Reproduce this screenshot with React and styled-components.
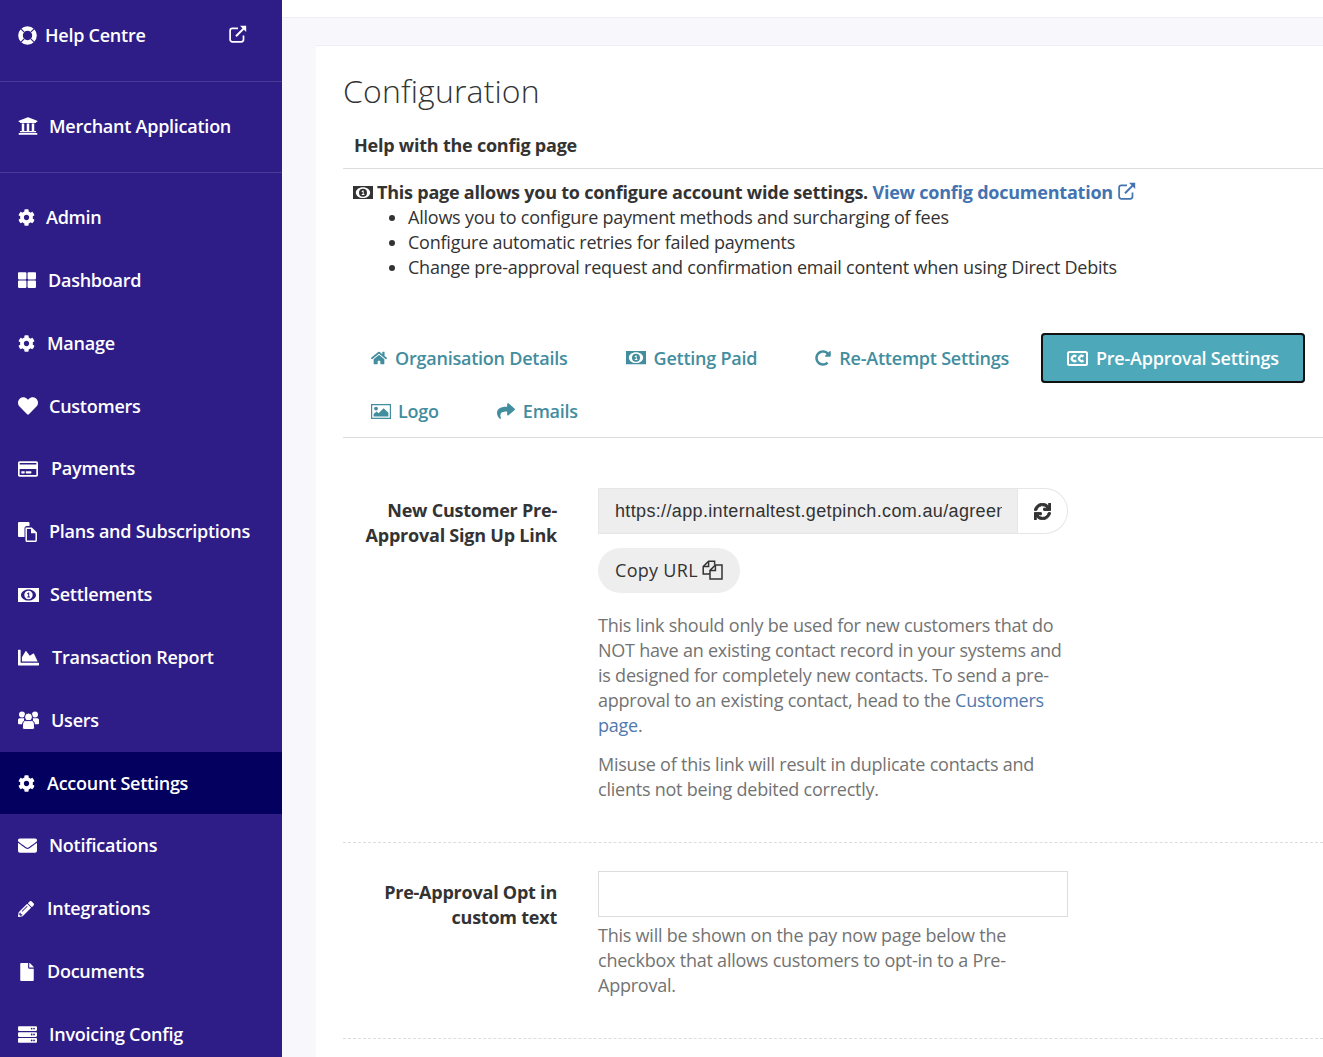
import React from 'react'
import styled, { createGlobalStyle } from 'styled-components'
import {
  FaUniversity,
  FaCog,
  FaThLarge,
  FaHeart,
  FaRegCreditCard,
  FaChartArea,
  FaEnvelope,
  FaPencilAlt,
  FaFile,
  FaServer,
  FaHome,
  FaRedoAlt,
  FaShare,
  FaSync,
} from 'react-icons/fa'

const GlobalStyle = createGlobalStyle`
  html, body {
    margin: 0;
    padding: 0;
    height: 100%;
    overflow: hidden;
  }
  body {
    font-family: "Open Sans", "Liberation Sans", sans-serif;
    font-size: 18px;
    line-height: 25px;
    letter-spacing: -0.23px;
    color: #333;
    background: #f7f7fc;
  }
  * { box-sizing: border-box; }
`

const LifeRingIcon = () => (
  <svg width="19" height="19" viewBox="0 0 19 19" fill="none" stroke="currentColor">
    <circle cx="9.5" cy="9.5" r="7" strokeWidth="4.6" />
    <path d="M2.6 2.6l3.6 3.6M16.4 2.600l-3.600 3.600M2.600 16.400l3.600-3.600M16.400 16.400l-3.600-3.600" stroke="#2e1d87" strokeWidth="1.1" />
  </svg>
)

const ExternalIcon = ({ size = 18 }) => (
  <svg width={size} height={size} viewBox="0 0 18 18" fill="none" stroke="currentColor" strokeWidth="1.7">
    <path d="M14.5 10.5v4a2.3 2.3 0 0 1-2.3 2.3H3.4a2.3 2.3 0 0 1-2.3-2.3V5.7a2.3 2.3 0 0 1 2.3-2.3H9" />
    <path d="M7 11.2L15.6 2.6" strokeWidth="2" />
    <path d="M11 .8h6.2V7z" fill="currentColor" stroke="none" />
  </svg>
)

const MoneyIcon = ({ width = 21 }) => (
  <svg width={width} height={(width * 14) / 21} viewBox="0 0 21 14" fill="currentColor">
    <path fillRule="evenodd" d="M0 0h21v14H0zM10.5 1.400C6.300 1.400 3 4 3 7s3.300 5.600 7.500 5.600S18 10 18 7s-3.300-5.600-7.500-5.600z" />
    <path fillRule="evenodd" d="M10.500 2.800a4.200 4.200 0 1 1 0 8.400 4.200 4.200 0 0 1 0-8.400zM9.200 5.200v1h1v2.300H9.200v1h2.800v-1h-.8V4.600h-.8z" />
  </svg>
)

const CaptionIcon = () => (
  <svg width="21" height="15" viewBox="0 0 21 15" fill="none" stroke="currentColor">
    <rect x="1" y="1" width="19" height="13" rx="1.5" strokeWidth="2" />
    <path d="M9.200 5.600a2.600 2.600 0 1 0 0 3.800M16.400 5.600a2.600 2.600 0 1 0 0 3.800" strokeWidth="2.300" />
  </svg>
)

const PictureIcon = () => (
  <svg width="20" height="15" viewBox="0 0 20 15" fill="currentColor">
    <path fillRule="evenodd" d="M0 0h20v15H0zM1.200 1.200v12.600h17.600V1.200z" />
    <circle cx="5" cy="4.600" r="1.900" />
    <path d="M2.600 12.400V10l3-2.600 2 1.800 5-5 4.800 4.600v3.600z" />
  </svg>
)

const PagesIcon = () => (
  <svg width="19" height="20" viewBox="0 0 19 20" fill="currentColor">
    <path d="M1 0h9.500a1 1 0 0 1 1 1v3H8L6.500 5.500V15H1a1 1 0 0 1-1-1V1a1 1 0 0 1 1-1z" />
    <path fill="none" stroke="currentColor" strokeWidth="1.500" d="M8.200 6.200h5.300l4.700 4.700v7.400a1 1 0 0 1-1 1H9.200a1 1 0 0 1-1-1z" />
    <path d="M13 6l5.400 5.200H13z" />
  </svg>
)

const CopyPagesIcon = () => (
  <svg width="21" height="20" viewBox="0 0 21 20" fill="none" stroke="currentColor" strokeWidth="1.500">
    <path d="M8 14H1.200V6.600L6.600 1.200h6v3.600" />
    <path d="M6.600 1.200v5.400H1.200" />
    <path d="M8 10.400l5.400-5.400h6.600v14H8z" />
    <path d="M13.400 5v5.400H8" />
  </svg>
)

const UsersIcon = () => (
  <svg width="21" height="19" viewBox="0 0 21 19" fill="currentColor">
    <circle cx="4" cy="3.400" r="3" />
    <circle cx="17" cy="3.400" r="3" />
    <path d="M0 12.500V9.200C0 7.600.8 7.200 2 7.200h4v6H1a1 1 0 0 1-1-.7zM21 12.500V9.200c0-1.600-.8-2-2-2h-4v6h5a1 1 0 0 0 1-.7z" />
    <circle cx="10.500" cy="6" r="4" stroke="#2e1d87" strokeWidth="1" />
    <path d="M4.500 14c0-3 1.300-4.400 3-4.400h6c1.700 0 3 1.400 3 4.400v2.500c0 1.500-1 2-2.500 2H7c-1.500 0-2.500-.5-2.500-2z" stroke="#2e1d87" strokeWidth="1" />
  </svg>
)

const Page = styled.div`
  display: flex;
  height: 1057px;
  overflow: hidden;
`

const Sidebar = styled.nav`
  width: 282px;
  flex: none;
  background: #2e1d87;
  color: #fff;
`

const SideGroup = styled.div`
  height: ${(p) => p.$height}px;
  display: flex;
  align-items: ${(p) => p.$align || 'center'};
  padding: ${(p) => p.$pad || '0 35px 0 18px'};
  border-bottom: 1px solid #4a3b97;
  justify-content: space-between;
`

const SideList = styled.div`
  padding-top: 13.2px;
`

const SideLabel = styled.span`
  display: flex;
  align-items: center;
  font-weight: 600;
  font-size: 18px;
  letter-spacing: -0.25px;
  white-space: nowrap;
`

const SideItem = styled.a`
  height: 62.83px;
  display: flex;
  align-items: center;
  padding-left: 18px;
  background: ${(p) => (p.$active ? '#03005f' : 'transparent')};
`

const IconSlot = styled.span`
  display: inline-flex;
  align-items: center;
  flex: none;
  width: ${(p) => (p.$width ? `${p.$width}px` : 'auto')};
  margin-top: ${(p) => p.$top || 0}px;
  font-size: ${(p) => p.$size || 18}px;
`

const Content = styled.div`
  flex: 1;
  min-width: 0;
`

const TopBar = styled.div`
  height: 18px;
  background: #fff;
  border-bottom: 1px solid #eeeef4;
`

const Card = styled.main`
  margin: 27px 0 0 34px;
  height: 1020px;
  background: #fff;
  border-top: 1px solid #eeeef4;
  padding: 0 0 0 27px;
`

const Title = styled.h1`
  margin: 0;
  padding-top: 24px;
  font-size: 32px;
  line-height: 42px;
  font-weight: 300;
  letter-spacing: 0.15px;
  color: #333;
`

const HelpHeading = styled.div`
  margin-top: 21px;
  padding: 0 0 10px 11px;
  font-weight: 700;
  border-bottom: 1px solid #ddd;
`

const HelpBody = styled.div`
  padding: 11px 0 0 10px;
`

const Lead = styled.div`
  display: flex;
  align-items: center;
  font-weight: 700;
  white-space: pre;
`

const DocLink = styled.a`
  color: #4373b0;
  display: inline-flex;
  align-items: center;
  gap: 5px;
`

const Bullets = styled.ul`
  margin: 0;
  padding-left: 55px;
`

const Tabs = styled.div`
  margin-top: 53px;
  padding: 0 0 1px 2px;
  display: flex;
  flex-wrap: wrap;
  row-gap: 3px;
  border-bottom: 1px solid #ddd;
`

const Tab = styled.a`
  height: 50px;
  margin-right: 6px;
  padding: 0 26px;
  display: flex;
  align-items: center;
  font-weight: 600;
  white-space: nowrap;
  color: ${(p) => (p.$active ? '#fff' : '#428d9e')};
  background: ${(p) => (p.$active ? '#4da8b9' : 'transparent')};
  border-radius: ${(p) => (p.$active ? '4px' : '0')};
  box-shadow: ${(p) => (p.$active ? 'inset 0 0 0 2px #111' : 'none')};
`

const Row = styled.section`
  display: grid;
  grid-template-columns: 214px 470px;
  column-gap: 41px;
  padding: ${(p) => p.$pad};
  border-bottom: 1px dashed #ddd;
`

const Label = styled.label`
  padding-top: ${(p) => p.$top || 10}px;
  text-align: right;
  font-weight: 700;
`

const InputGroup = styled.div`
  display: flex;
  height: 46px;
`

const UrlInput = styled.input`
  width: 420px;
  height: 46px;
  padding: 0 15px 0 16px;
  border: 1px solid #e6e6e6;
  background: #eee;
  font-family: "Liberation Sans", Arial, sans-serif;
  font-size: 18px;
  letter-spacing: 0.35px;
  color: #333;
  outline: none;
`

const RefreshButton = styled.button`
  width: 50px;
  height: 46px;
  padding: 0;
  border: 1px solid #e6e6e6;
  border-left: 0;
  border-radius: 0 23px 23px 0;
  background: #fff;
  color: #333;
  display: flex;
  align-items: center;
  justify-content: center;
  font-size: 17px;

  svg path {
    stroke: currentColor;
    stroke-width: 28px;
  }
`

const CopyButton = styled.button`
  margin-top: 14px;
  height: 45px;
  padding: 0 17px 2px;
  border: 0;
  border-radius: 23px;
  background: #eee;
  color: #333;
  display: inline-flex;
  align-items: center;
  gap: 4px;
  font-family: inherit;
  font-size: 18px;
  letter-spacing: 0.3px;
`

const HelpText = styled.p`
  margin: ${(p) => p.$top}px 0 0;
  color: #737373;
`

const InlineLink = styled.a`
  color: #5079ad;
`

const TextInput = styled.input`
  display: block;
  width: 470px;
  height: 46px;
  border: 1px solid #ddd;
  background: #fff;
  outline: none;
`

const navItems = [
  { label: 'Admin', icon: <FaCog />, width: 28, size: 17 },
  { label: 'Dashboard', icon: <FaThLarge />, width: 30, size: 18 },
  { label: 'Manage', icon: <FaCog />, width: 29, size: 17 },
  { label: 'Customers', icon: <FaHeart />, width: 31, size: 20 },
  { label: 'Payments', icon: <FaRegCreditCard />, width: 33, size: 20 },
  { label: 'Plans and Subscriptions', icon: <PagesIcon />, width: 31 },
  { label: 'Settlements', icon: <MoneyIcon />, width: 32 },
  { label: 'Transaction Report', icon: <FaChartArea />, width: 34, size: 21 },
  { label: 'Users', icon: <UsersIcon />, width: 33 },
  { label: 'Account Settings', icon: <FaCog />, width: 29, size: 17, active: true },
  { label: 'Notifications', icon: <FaEnvelope />, width: 31, size: 19 },
  { label: 'Integrations', icon: <FaPencilAlt />, width: 29, size: 16 },
  { label: 'Documents', icon: <FaFile />, width: 29, size: 18 },
  { label: 'Invoicing Config', icon: <FaServer />, width: 31, size: 19 },
]

const tabs = [
  { label: 'Organisation Details', icon: <FaHome />, width: 24, size: 16 },
  { label: 'Getting Paid', icon: <MoneyIcon width={20} />, width: 28 },
  { label: 'Re-Attempt Settings', icon: <FaRedoAlt />, width: 24, size: 16 },
  { label: 'Pre-Approval Settings', icon: <CaptionIcon />, width: 29, active: true },
  { label: 'Logo', icon: <PictureIcon />, width: 27 },
  { label: 'Emails', icon: <FaShare />, width: 26, size: 18 },
]

export default function App() {
  return (
    <Page>
      <GlobalStyle />
      <Sidebar>
        <SideGroup $height={82} $align="flex-start" $pad="23px 35px 0 18px">
          <SideLabel>
            <IconSlot $width={27}><LifeRingIcon /></IconSlot>
            Help Centre
          </SideLabel>
          <IconSlot $top={2}><ExternalIcon /></IconSlot>
        </SideGroup>
        <SideGroup $height={91} $pad="0 35px 2px 18px">
          <SideLabel>
            <IconSlot $width={31} $size={20}><FaUniversity /></IconSlot>
            Merchant Application
          </SideLabel>
        </SideGroup>
        <SideList>
          {navItems.map((item) => (
            <SideItem key={item.label} $active={item.active}>
              <SideLabel>
                <IconSlot $width={item.width} $size={item.size}>{item.icon}</IconSlot>
                {item.label}
              </SideLabel>
            </SideItem>
          ))}
        </SideList>
      </Sidebar>
      <Content>
        <TopBar />
        <Card>
          <Title>Configuration</Title>
          <HelpHeading>Help with the config page</HelpHeading>
          <HelpBody>
            <Lead>
              <IconSlot $width={24}><MoneyIcon width={20} /></IconSlot>
              {'This page allows you to configure account wide settings. '}
              <DocLink>
                View config documentation
                <IconSlot $top={-4}><ExternalIcon /></IconSlot>
              </DocLink>
            </Lead>
            <Bullets>
              <li>Allows you to configure payment methods and surcharging of fees</li>
              <li>Configure automatic retries for failed payments</li>
              <li>Change pre-approval request and confirmation email content when using Direct Debits</li>
            </Bullets>
          </HelpBody>
          <Tabs>
            {tabs.map((tab) => (
              <Tab key={tab.label} $active={tab.active}>
                <IconSlot $width={tab.width} $size={tab.size}>{tab.icon}</IconSlot>
                {tab.label}
              </Tab>
            ))}
          </Tabs>
          <Row $pad="50px 0 40px">
            <Label>New Customer Pre-Approval Sign Up Link</Label>
            <div>
              <InputGroup>
                <UrlInput readOnly value="https://app.internaltest.getpinch.com.au/agreement/new" />
                <RefreshButton><FaSync /></RefreshButton>
              </InputGroup>
              <CopyButton>
                Copy URL
                <IconSlot><CopyPagesIcon /></IconSlot>
              </CopyButton>
              <HelpText $top={20}>
                This link should only be used for new customers that do NOT have an existing contact record in your systems and is designed for completely new contacts. To send a pre-approval to an existing contact, head to the <InlineLink>Customers page</InlineLink>.
              </HelpText>
              <HelpText $top={14}>
                Misuse of this link will result in duplicate contacts and clients not being debited correctly.
              </HelpText>
            </div>
          </Row>
          <Row $pad="28px 0 40px">
            <Label $top={9}>Pre-Approval Opt in custom text</Label>
            <div>
              <TextInput />
              <HelpText $top={6}>
                This will be shown on the pay now page below the checkbox that allows customers to opt-in to a Pre-Approval.
              </HelpText>
            </div>
          </Row>
        </Card>
      </Content>
    </Page>
  )
}
